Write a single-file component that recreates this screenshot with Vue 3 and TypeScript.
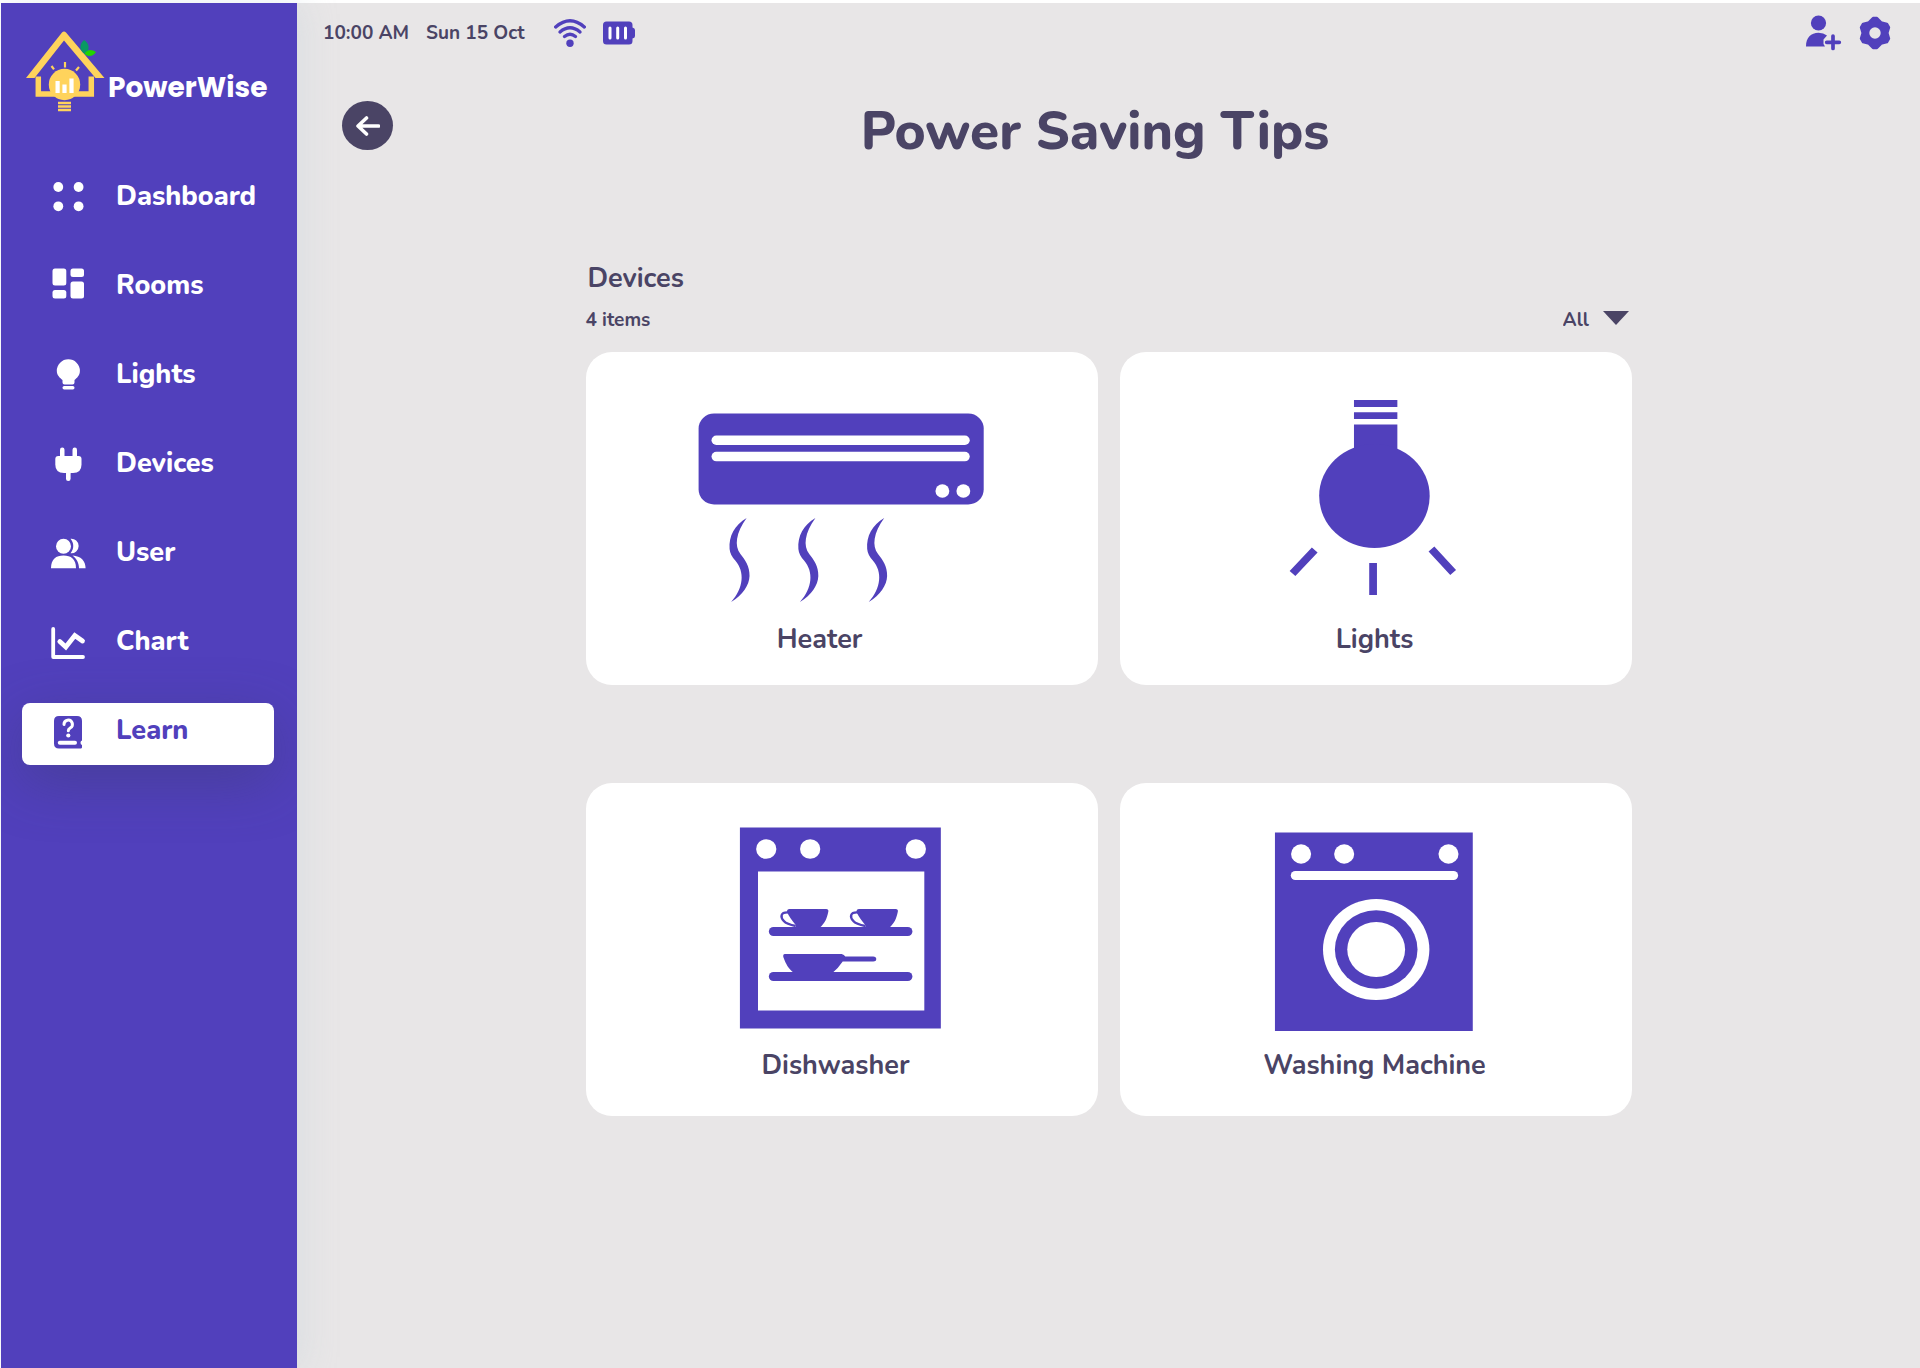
<script setup lang="ts">
import { ref } from 'vue'

interface NavItem {
  id: string
  label: string
}

interface Tip {
  id: string
  label: string
  artHeight: number
}

const navItems: NavItem[] = [
  { id: 'dashboard', label: 'Dashboard' },
  { id: 'rooms', label: 'Rooms' },
  { id: 'lights', label: 'Lights' },
  { id: 'devices', label: 'Devices' },
  { id: 'user', label: 'User' },
  { id: 'chart', label: 'Chart' },
  { id: 'learn', label: 'Learn' },
]

const tips: Tip[] = [
  { id: 'heater', label: 'Heater', artHeight: 270 },
  { id: 'lights', label: 'Lights', artHeight: 270 },
  { id: 'dishwasher', label: 'Dishwasher', artHeight: 265 },
  { id: 'washer', label: 'Washing Machine', artHeight: 265 },
]

const active = ref('learn')
const filter = ref('All')
</script>

<template>
  <div class="app">
    <aside class="sidebar">
      <a class="brand" href="#">
        <svg class="brand-mark" viewBox="26 31 80 82" aria-hidden="true">
          <path d="M62 32.500Q64 30.500 66 32.500L104.500 78H95.500L64 40.500L34.500 78H26Z" fill="#ffd35c" />
          <path d="M38.300 76.500V94H91.300V76.500" fill="none" stroke="#ffd35c" stroke-width="5.500" />
          <circle cx="64.500" cy="84.500" r="15.700" fill="#ffd35c" />
          <path d="M65 62V67.500M51.500 66L54 69.300M79 67L76 70.500" stroke="#ffd35c" stroke-width="2.200" />
          <path d="M57.600 81V93M64.500 84.500V93M71.500 78.500V93" stroke="#fff" stroke-width="4.200" />
          <path d="M58 103H71M58 106.500H71M58 110H71" stroke="#ffd35c" stroke-width="2.400" />
          <path d="M84 40C90 44 90 50 85 54C79 51 79 44 84 40Z" fill="#0a9a63" />
          <path d="M84.500 54C87 49 92 49 96 52C93 57 88 57 84.500 54Z" fill="#22d400" />
        </svg>
        <span class="brand-name">PowerWise</span>
      </a>

      <nav class="nav" aria-label="Main">
        <a
          v-for="item in navItems"
          :key="item.id"
          class="nav-item"
          :class="{ active: item.id === active }"
          :href="'#' + item.id"
          @click="active = item.id"
        >
          <svg class="nav-icon" viewBox="0 0 36 36" fill="currentColor" aria-hidden="true">
            <template v-if="item.id === 'dashboard'">
              <circle cx="8.300" cy="8" r="4.900" /><circle cx="28.600" cy="8" r="4.900" />
              <circle cx="8.300" cy="27.300" r="4.900" /><circle cx="28.600" cy="27.300" r="4.900" />
            </template>
            <template v-else-if="item.id === 'rooms'">
              <rect x="2.500" y="0.500" width="13.800" height="17" rx="2.500" />
              <rect x="2.500" y="22" width="13.800" height="8.500" rx="2.500" />
              <rect x="20.500" y="0.500" width="13.500" height="8.500" rx="2.500" />
              <rect x="20.500" y="13.500" width="13.500" height="17" rx="2.500" />
            </template>
            <template v-else-if="item.id === 'lights'">
              <path d="M18.300 2.300A11.500 11.500 0 0 1 29.900 13.800C29.900 18.500 27 21 24.500 23V25.500Q24.500 27.500 22.500 27.500H14.500Q12.500 27.500 12.500 25.500V23C10 21 6.800 18.500 6.800 13.800A11.500 11.500 0 0 1 18.300 2.300Z" />
              <rect x="12.500" y="29" width="12" height="3.500" rx="1.700" />
            </template>
            <template v-else-if="item.id === 'devices'">
              <rect x="10" y="1.500" width="4.500" height="12" rx="2.200" />
              <rect x="22.500" y="1.500" width="4.500" height="12" rx="2.200" />
              <path d="M8.300 10H28.500Q31.500 10 31.500 13V18.500Q31.500 27 23 27H14Q5.300 27 5.300 18.500V13Q5.300 10 8.300 10Z" />
              <rect x="16" y="25" width="4.600" height="10" rx="2.200" />
            </template>
            <template v-else-if="item.id === 'user'">
              <circle cx="13.500" cy="11.200" r="7.500" />
              <path d="M1 33.300C1 24 6 20.500 13.500 20.500S26 24 26 33.300Z" />
              <path d="M20.500 3.800A7.300 7.300 0 1 1 20.500 18.300C24.200 14 24.200 8 20.500 3.800Z" />
              <path d="M22.500 20.500C31 21 35.600 26 35.600 33.300H29C29 28 26.500 23.500 22.500 20.500Z" />
            </template>
            <template v-else-if="item.id === 'chart'">
              <g fill="none" stroke="currentColor" stroke-linecap="round" stroke-linejoin="round">
                <path d="M3.200 5V33H33" stroke-width="3.800" />
                <path d="M9.800 17.500L15.800 23L24.800 11.500L32.500 17" stroke-width="4.800" stroke-linejoin="miter" />
              </g>
            </template>
            <template v-else>
              <path d="M9 3H27Q32 3 32 8V27.500Q30.500 28 30.500 29.800T32 32V33.500Q32.300 35.500 31 35.500H9Q4 35.500 4 30.500V8Q4 3 9 3Z" />
              <path d="M9.800 29.800H25" fill="none" stroke="#fff" stroke-width="4" stroke-linecap="round" />
              <path d="M14 11.500A4.200 4.200 0 1 1 20.200 15Q18.300 16.200 18.300 17.800" fill="none" stroke="#fff" stroke-width="3" stroke-linecap="round" />
              <circle cx="18.300" cy="22.500" r="2.100" fill="#fff" />
            </template>
          </svg>
          <span>{{ item.label }}</span>
        </a>
      </nav>
    </aside>

    <main class="main">
      <div class="topbar">
        <div class="status">
          <time>10:00 AM</time>
          <time>Sun 15 Oct</time>
          <svg class="wifi" viewBox="0 0 32 28" aria-label="Wi-Fi">
            <g fill="none" stroke="#5140bc" stroke-width="3.400" stroke-linecap="round">
              <path d="M1.700 8Q16 -4.300 30.300 8" />
              <path d="M6 13Q16 4.600 26 13" />
              <path d="M10.500 17.500Q16 13 21.500 17.500" />
            </g>
            <circle cx="16" cy="24.200" r="3.700" fill="#5140bc" />
          </svg>
          <svg class="battery" viewBox="0 0 32 24" aria-label="Battery">
            <path d="M3.500 0.500H26Q29.500 0.500 29.500 4V6.500Q32 7 32 9V15Q32 17 29.500 17.500V20Q29.500 23.500 26 23.500H3.500Q0 23.500 0 20V4Q0 0.500 3.500 0.500Z" fill="#5140bc" />
            <path d="M7 7V17M14.700 7V17M22.500 7V17" stroke="#fff" stroke-width="3" stroke-linecap="round" />
          </svg>
        </div>
        <div class="actions">
          <button type="button" aria-label="Add user">
            <svg width="36" height="36" viewBox="0 0 36 36" aria-hidden="true">
              <circle cx="12.500" cy="8" r="7.600" fill="#5140bc" />
              <path d="M0 31.500C0 22.500 5 17.800 12.500 17.800Q17.500 17.800 21 20.500L17.500 24.500V29L19 31.500Z" fill="#5140bc" />
              <path d="M27 21V33.500M20.700 27.300H33.300" stroke="#5140bc" stroke-width="3.700" stroke-linecap="round" />
            </svg>
          </button>
          <button type="button" aria-label="Settings">
            <svg width="32" height="34" viewBox="-16 -17 32 34" aria-hidden="true">
              <path
                d="M12.300 0L13.900 5.600L11.900 9.100L6.100 10.600L1.900 14.900H-1.900L-6.100 10.600L-11.900 9.100L-13.900 5.600L-12.300 0L-13.900 -5.600L-11.900 -9.100L-6.100 -10.600L-1.900 -14.900H1.900L6.100 -10.600L11.900 -9.100L13.900 -5.600ZM7 0A7 7 0 1 0 -7 0A7 7 0 1 0 7 0Z"
                fill="#5140bc"
                fill-rule="evenodd"
                stroke="#5140bc"
                stroke-width="2.600"
                stroke-linejoin="round"
              />
            </svg>
          </button>
        </div>
      </div>

      <header class="page-head">
        <button class="back" type="button" aria-label="Back">
          <svg width="24" height="20" viewBox="0 0 24 20" aria-hidden="true">
            <path d="M22.500 10H3M10.500 2L2 10L10.500 18" fill="none" stroke="#fff" stroke-width="3.600" stroke-linecap="round" stroke-linejoin="round" />
          </svg>
        </button>
        <h1>Power Saving Tips</h1>
      </header>

      <section class="tips" aria-labelledby="tips-title">
        <h2 id="tips-title">Devices</h2>
        <div class="tips-bar">
          <span>4 items</span>
          <label class="filter">
            <select v-model="filter" aria-label="Filter devices">
              <option>All</option>
            </select>
            <svg width="26" height="18" viewBox="0 0 26 18" aria-hidden="true">
              <path d="M0 0H26L13 14Z" fill="#4a4465" />
            </svg>
          </label>
        </div>

        <div class="grid">
          <a v-for="tip in tips" :key="tip.id" class="card" :class="tip.id" :href="'#tips-' + tip.id">
            <svg class="art" :viewBox="`0 0 512 ${tip.artHeight}`" fill="#5140bc" aria-hidden="true">
              <g transform="scale(1.033 1)">
                <template v-if="tip.id === 'heater'">
                  <rect x="109" y="61.500" width="276" height="91" rx="15" />
                  <rect x="121.500" y="83.500" width="250" height="9.500" rx="4.700" fill="#fff" />
                  <rect x="121.500" y="99.800" width="250" height="9.500" rx="4.700" fill="#fff" />
                  <circle cx="345" cy="139" r="6.700" fill="#fff" />
                  <circle cx="365.300" cy="139" r="6.700" fill="#fff" />
                  <path
                    v-for="x in [0, 66.600, 133.200]"
                    :key="x"
                    :transform="`translate(${x} 0)`"
                    d="M155.500 166C144 173 138 184 139 197Q139.500 203 144.500 208.500C154 220 152.500 236 140.500 250C152 243 158 233 158.300 224C158.500 214 154 208 149.500 202C143.500 194 145 181 155.500 166Z"
                  />
                </template>
                <template v-else-if="tip.id === 'lights'">
                  <path d="M226.500 48H268.500V55H226.500ZM226.500 60.300H268.500V67H226.500ZM226.500 72.500H268.500V100H226.500Z" />
                  <ellipse cx="246.300" cy="144" rx="53.500" ry="52" />
                  <path d="M188.500 198L167 221.500M245 211V243M301.500 197L322.500 220.500" fill="none" stroke="#5140bc" stroke-width="7.500" />
                </template>
                <template v-else-if="tip.id === 'dishwasher'">
                  <rect x="149" y="44.500" width="194.500" height="201" />
                  <circle cx="174.500" cy="66" r="9.800" fill="#fff" />
                  <circle cx="217" cy="66" r="9.800" fill="#fff" />
                  <circle cx="319.300" cy="66" r="9.800" fill="#fff" />
                  <rect x="166.500" y="88.500" width="161" height="139" fill="#fff" />
                  <rect x="177" y="144" width="139" height="9" rx="4.500" />
                  <rect x="177" y="189" width="139" height="9" rx="4.500" />
                  <g v-for="x in [0, 67.300]" :key="x" :transform="`translate(${x} 0)`">
                    <path d="M197 126H232.500Q235 126 234.600 128.500C233 136 231.500 140 226 145H203V142C199 137 197 134 194.500 129Q194.500 126 197 126Z" />
                    <path d="M196 129.500C188 129 188 134 191.500 138C194 141 198 142 203 143" fill="none" stroke="#5140bc" stroke-width="2.300" />
                  </g>
                  <path d="M192.500 171H247.500Q250 171.500 251 173.500H278Q281 173.500 281 176Q281 178.500 278 178.500H248.500Q244 185.500 238.500 190H201.500C196 186 193.500 181 191 174Q190.500 171 192.500 171Z" />
                </template>
                <template v-else>
                  <rect x="150" y="49.500" width="191.500" height="198.500" />
                  <circle cx="175.300" cy="71" r="9.700" fill="#fff" />
                  <circle cx="217" cy="71" r="9.700" fill="#fff" />
                  <circle cx="318" cy="71" r="9.700" fill="#fff" />
                  <rect x="165.300" y="88" width="162" height="9" rx="4.500" fill="#fff" />
                  <ellipse cx="248" cy="166.500" rx="51.500" ry="50.500" fill="#fff" />
                  <ellipse cx="248" cy="166.500" rx="40" ry="39.300" />
                  <ellipse cx="248" cy="166.500" rx="28" ry="27.500" fill="#fff" />
                </template>
              </g>
            </svg>
            <span class="card-label">{{ tip.label }}</span>
          </a>
        </div>
      </section>
    </main>
  </div>
</template>

<style>
body {
  background: #fff;
}
</style>

<style scoped>
.app {
  box-sizing: border-box;
  display: flex;
  min-height: 100vh;
  padding: 3px 0 0 1px;
  color: #4a4465;
  font-family: Nunito, Lato, 'Open Sans', sans-serif;
  font-weight: 700;
}

a {
  color: inherit;
  text-decoration: none;
}

button {
  display: flex;
  padding: 0;
  border: 0;
  background: none;
  cursor: pointer;
}

.sidebar {
  z-index: 1;
  flex: 0 0 296px;
  overflow: hidden;
  background: #5140bc;
  box-shadow: 4px 0 32px rgba(190, 205, 215, 0.35);
  color: #fff;
}

.brand {
  display: flex;
  gap: 2px;
  padding: 28px 0 0 25px;
}

.brand-mark {
  width: 80px;
  height: 82px;
}

.brand-name {
  padding-top: 37px;
  font-family: Poppins, Inter, sans-serif;
  font-size: 28px;
  line-height: 40px;
}

.nav {
  display: flex;
  flex-direction: column;
  gap: 27px;
  padding: 56px 23px 0 21px;
}

.nav-item {
  box-sizing: border-box;
  display: flex;
  align-items: center;
  gap: 30px;
  height: 62px;
  padding: 0 0 7px 28px;
  border-radius: 8px;
  font-size: 27px;
  font-weight: 800;
}

.nav-item.active {
  background: #fff;
  box-shadow: 0 16px 56px rgba(60, 60, 110, 0.45);
  color: #5140bc;
}

.nav-icon {
  width: 36px;
  height: 36px;
}

.main {
  flex: 1;
  min-width: 0;
  background: #e8e6e7;
}

.topbar {
  box-sizing: border-box;
  display: flex;
  align-items: center;
  justify-content: space-between;
  height: 58px;
  padding: 1px 29px 0 26px;
  font-size: 19px;
}

.status,
.actions {
  display: flex;
  align-items: center;
  gap: 17px;
}

.wifi {
  width: 32px;
  height: 28px;
  margin-left: 12px;
}

.battery {
  width: 32px;
  height: 24px;
}

.page-head {
  display: grid;
  grid-template-columns: 1fr auto 1fr;
  align-items: start;
  padding: 34px 27px 0 0;
}

.back {
  align-items: center;
  justify-content: center;
  width: 51px;
  height: 49px;
  margin: 6px 0 0 45px;
  border-radius: 50%;
  background: #4a4465;
}

h1 {
  margin: 0;
  font-size: 53px;
  font-weight: 800;
  line-height: 74px;
}

.tips {
  max-width: 1046px;
  margin: 93px auto 0;
}

h2 {
  margin: 0;
  padding-left: 2px;
  font-size: 27px;
  line-height: 34px;
}

.tips-bar {
  display: flex;
  justify-content: space-between;
  margin: 12px 0 20px;
  padding-right: 3px;
  font-size: 19px;
  line-height: 24px;
}

.filter {
  display: flex;
  align-items: center;
  gap: 13px;
}

select {
  appearance: none;
  padding: 0;
  border: 0;
  background: none;
  color: inherit;
  font: inherit;
  cursor: pointer;
}

.grid {
  display: grid;
  grid-template-columns: 1fr 1fr;
  gap: 98px 22px;
}

.card {
  display: flex;
  flex-direction: column;
  min-height: 333px;
  border-radius: 26px;
  background: #fff;
}

.art {
  width: 100%;
}

.card-label {
  padding-right: 2px;
  font-size: 27px;
  line-height: 36px;
  text-align: center;
}

.heater .card-label {
  padding-right: 44px;
}

.dishwasher .card-label {
  padding-right: 12px;
}
</style>
